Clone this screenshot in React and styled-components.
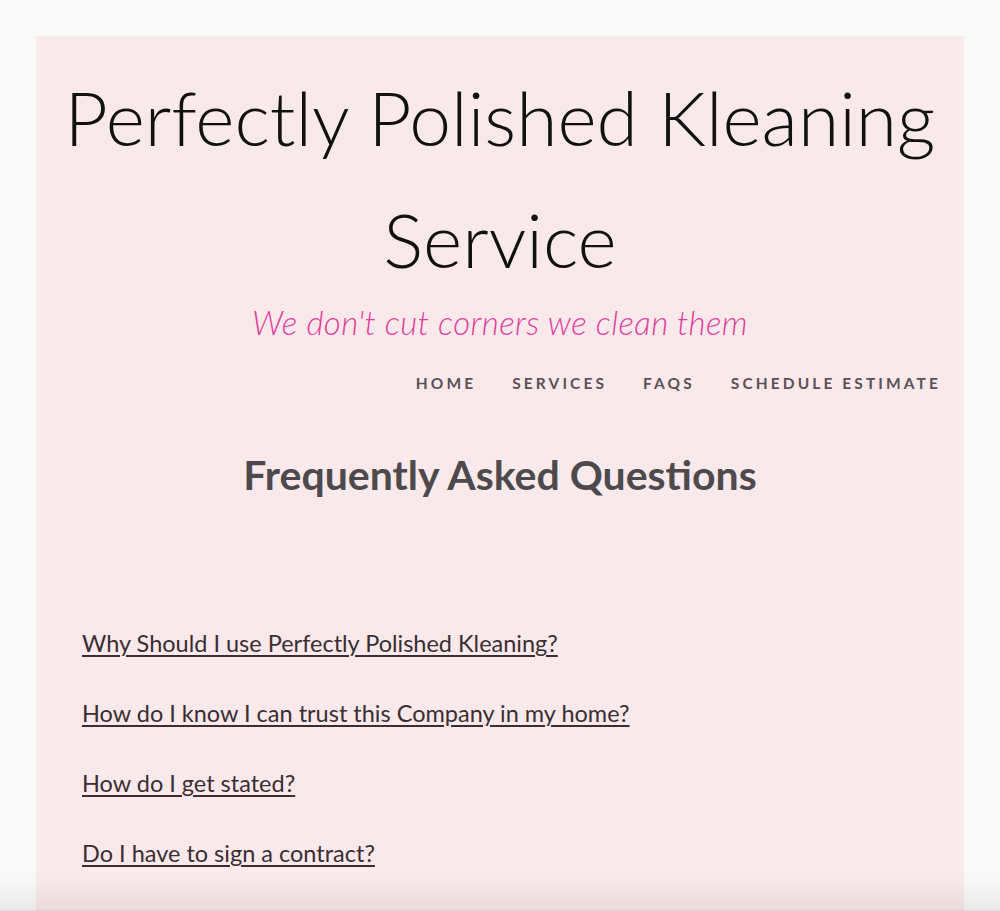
import React from "react";
import styled, { createGlobalStyle } from "styled-components";

const Global = createGlobalStyle`
  html, body { margin: 0; padding: 0; background: #f9f9f9; }
  body { font-family: "Lato", "Liberation Sans", sans-serif; overflow: hidden; }
`;

const Page = styled.div`
  padding: 36px 36px 0 36px;
  height: 911px;
  box-sizing: border-box;
  position: relative;
`;

const Card = styled.div`
  background: #f9e9eb;
  height: 100%;
  padding: 20px 23px 0 46px;
  box-sizing: border-box;
`;

const Header = styled.header`
  display: flex;
  flex-direction: column;
  align-items: stretch;
`;

const Title = styled.h1`
  margin: 0 0 0 -23px;
  text-align: center;
  font-family: "Lato", sans-serif;
  font-weight: 300;
  font-size: 75px;
  line-height: 122px;
  color: #111;
`;

const Tagline = styled.p`
  margin: 0 0 0 -23px;
  text-align: center;
  font-style: italic;
  font-weight: 300;
  font-size: 33px;
  letter-spacing: 0.4px;
  line-height: 44px;
  color: #e23f9e;
`;

const Nav = styled.nav`
  display: flex;
  justify-content: flex-end;
  gap: 36px;
  margin-top: 29px;
`;

const NavItem = styled.a`
  font-weight: 700;
  font-size: 15.5px;
  letter-spacing: 3.1px;
  text-transform: uppercase;
  color: #5b5156;
  text-decoration: none;
  line-height: 20px;
`;

const Heading = styled.h2`
  margin: 57px 0 0 -23px;
  text-align: center;
  font-weight: 700;
  font-size: 41px;
  line-height: 50px;
  color: #4d494c;
`;

const List = styled.ul`
  list-style: none;
  margin: 128px 0 0 0;
  padding: 0;
  display: flex;
  flex-direction: column;
  gap: 40px;
`;

const Question = styled.a`
  font-size: 23.5px;
  line-height: 30px;
  color: #3b2d31;
  text-decoration: underline;
  text-underline-offset: 3px;
  text-decoration-thickness: 2px;
`;

const BottomShade = styled.div`
  position: absolute;
  left: 0;
  right: 0;
  bottom: 0;
  height: 36px;
  background: linear-gradient(to bottom, rgba(0,0,0,0) 0%, rgba(0,0,0,0.06) 95%, rgba(0,0,0,0.14) 100%);
  pointer-events: none;
`;

const questions = [
  "Why Should I use Perfectly Polished Kleaning?",
  "How do I know I can trust this Company in my home?",
  "How do I get stated?",
  "Do I have to sign a contract?",
];

export default function App() {
  return (
    <>
      <Global />
      <Page>
        <Card>
          <Header>
            <Title>Perfectly Polished Kleaning Service</Title>
            <Tagline>We don't cut corners we clean them</Tagline>
            <Nav>
              <NavItem href="#">Home</NavItem>
              <NavItem href="#">Services</NavItem>
              <NavItem href="#">FAQs</NavItem>
              <NavItem href="#">Schedule Estimate</NavItem>
            </Nav>
          </Header>
          <Heading>Frequently Asked Questions</Heading>
          <List>
            {questions.map((q) => (
              <li key={q}>
                <Question href="#">{q}</Question>
              </li>
            ))}
          </List>
        </Card>
        <BottomShade />
      </Page>
    </>
  );
}
